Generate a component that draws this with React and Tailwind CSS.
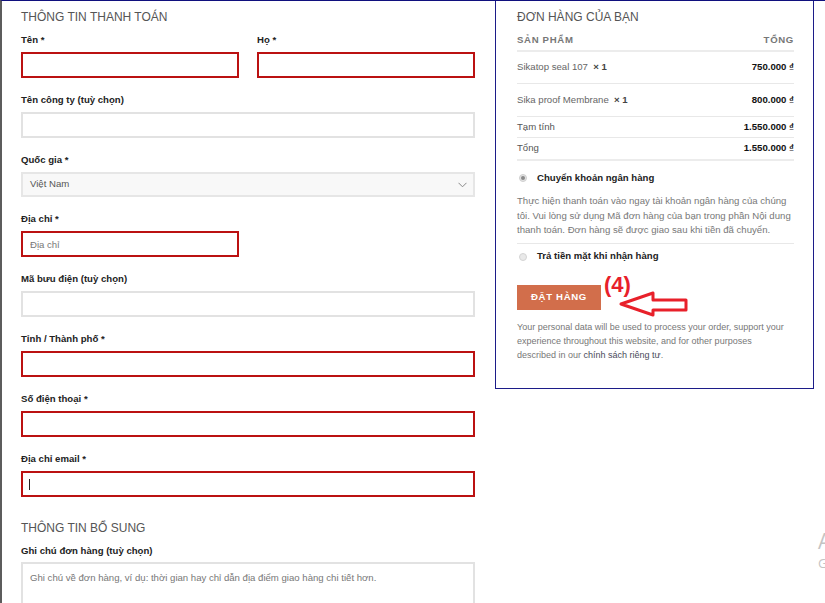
import { useState } from "react";

const inputBase =
  "block w-full h-[26px] px-[7px] text-[9.6px] text-[#333] placeholder:text-[#777] bg-white outline-none";

function Label({ children }) {
  return (
    <label className="block text-[9.6px] leading-[12px] font-bold text-[#222] mb-[6px]">
      {children}
    </label>
  );
}

function TextInput({ error = false, placeholder = "" }) {
  return (
    <input
      type="text"
      readOnly
      placeholder={placeholder}
      className={`${inputBase} ${
        error
          ? "border-2 border-[#bb1111]"
          : "border-2 border-[#e2e2e2]"
      }`}
    />
  );
}

function Field({ label, error, placeholder, children }) {
  return (
    <div className="mb-[16px]">
      <Label>{label}</Label>
      {children || <TextInput error={error} placeholder={placeholder} />}
    </div>
  );
}

function CountrySelect() {
  return (
    <div className="flex items-center justify-between h-[25px] pl-[7px] pr-[6px] bg-[#f8f8f8] border-2 border-[#e6e6e6] text-[9.6px] text-[#555]">
      <span>Việt Nam</span>
      <svg width="9" height="6" viewBox="0 0 9 6" fill="none">
        <polyline points="0.5,0.8 4.5,4.8 8.5,0.8" stroke="#888" strokeWidth="1" />
      </svg>
    </div>
  );
}

function EmailInput() {
  return (
    <div className="relative">
      <TextInput error />
      <span className="absolute left-[8px] top-[8px] w-px h-[11px] bg-[#222]" />
    </div>
  );
}

function OrderRow({ name, qty, price, height }) {
  return (
    <div className={`flex items-center justify-between border-b border-[#e8e8e8] ${height}`}>
      <span className="text-[#666]">
        {name}
        {"\u00a0 "}
        <strong className="text-[#444]">× {qty}</strong>
      </span>
      <span className="font-bold text-[#111]">{price}</span>
    </div>
  );
}

function Radio({ checked }) {
  return (
    <span
      className={`ml-[2px] w-[8px] h-[8px] rounded-full flex items-center justify-center shrink-0 ${
        checked ? "bg-[#e4e4e4] border border-[#cfcfcf]" : "bg-[#e9e9e9] border border-[#d4d4d4]"
      }`}
    >
      {checked && <span className="w-[4px] h-[4px] rounded-full bg-[#8a8a8a]" />}
    </span>
  );
}

function OrderReview() {
  const [method] = useState("bank");

  return (
    <div className="w-[319px] shrink-0 self-start ml-[20px] border-x border-b border-[#1c1c88] pl-[21px] pr-[19px] pt-[8px] pb-[26px] text-[9.6px]">
      <h3 className="text-[12px] leading-[16px] text-[#555] uppercase">
        Đơn hàng của bạn
      </h3>

      <div className="mt-[9px] flex justify-between pb-[4px] border-b-2 border-[#ececec] leading-[12px] font-bold text-[#777] tracking-[0.07em]">
        <span>SẢN PHẨM</span>
        <span>TỔNG</span>
      </div>

      <OrderRow name="Sikatop seal 107" qty="1" price="750.000 ₫" height="h-[32px]" />
      <OrderRow name="Sika proof Membrane" qty="1" price="800.000 ₫" height="h-[33px]" />

      <div className="flex items-center justify-between h-[21px] border-b border-[#e8e8e8]">
        <span className="text-[#555]">Tạm tính</span>
        <span className="font-bold text-[#111]">1.550.000 ₫</span>
      </div>
      <div className="flex items-center justify-between h-[23px] border-b-2 border-[#ececec]">
        <span className="text-[#555]">Tổng</span>
        <span className="font-bold text-[#111]">1.550.000 ₫</span>
      </div>

      <div className="mt-[9px] flex items-center h-[16px] gap-[10px]">
        <Radio checked={method === "bank"} />
        <span className="font-bold text-[#222]">Chuyển khoản ngân hàng</span>
      </div>
      <p className="mt-[8px] pb-[5px] leading-[14.5px] text-[#777] border-b border-[#e8e8e8]">
        Thực hiện thanh toán vào ngay tài khoản ngân hàng của chúng tôi. Vui lòng sử
        dụng Mã đơn hàng của bạn trong phần Nội dung thanh toán. Đơn hàng sẽ được
        giao sau khi tiền đã chuyển.
      </p>
      <div className="mt-[5px] flex items-center h-[16px] gap-[10px]">
        <Radio checked={method === "cod"} />
        <span className="font-bold text-[#222]">Trả tiền mặt khi nhận hàng</span>
      </div>

      <div className="relative mt-[20px] flex">
        <button
          type="button"
          className="h-[25px] w-[84px] bg-[#d26e4b] text-white font-bold tracking-[0.07em] text-[9.6px]"
        >
          ĐẶT HÀNG
        </button>
        <span className="absolute left-[87px] top-[-13px] text-[22px] leading-[26px] font-bold text-[#e8202a]">
          (4)
        </span>
        <svg
          className="absolute left-[101px] top-[4px]"
          width="72"
          height="30"
          viewBox="0 0 72 30"
          fill="none"
        >
          <path
            d="M3 15 L35 4 L35 11 L68 11 L68 21 L35 21 L35 26 Z"
            stroke="#e8202a"
            strokeWidth="3"
            strokeLinejoin="round"
          />
        </svg>
      </div>

      <p className="mt-[10px] pr-[6px] text-[9px] leading-[14px] text-[#777]">
        Your personal data will be used to process your order, support your
        experience throughout this website, and for other purposes described in
        our <a className="text-[#4a4a5a]">chính sách riêng tư</a>.
      </p>
    </div>
  );
}

export default function App() {
  return (
    <div className="relative h-[603px] overflow-hidden bg-white border-t border-[#10107e] border-l-2 border-l-[#5c5c5c] font-['Liberation_Sans',Arial,sans-serif] flex items-start">
      <div className="w-[454px] shrink-0 ml-[19px] pt-[8px]">
        <h3 className="text-[12px] leading-[16px] text-[#555] uppercase mb-[9px]">
          Thông tin thanh toán
        </h3>

        <div className="grid grid-cols-2 gap-x-[18px]">
          <Field label="Tên *" error />
          <Field label="Họ *" error />
        </div>
        <Field label="Tên công ty (tuỳ chọn)" />
        <Field label="Quốc gia *">
          <CountrySelect />
        </Field>
        <div className="w-[218px]">
          <Field label="Địa chỉ *" error placeholder="Địa chỉ" />
        </div>
        <Field label="Mã bưu điện (tuỳ chọn)" />
        <Field label="Tỉnh / Thành phố *" error />
        <Field label="Số điện thoại *" error />
        <Field label="Địa chỉ email *">
          <EmailInput />
        </Field>

        <h3 className="mt-[23px] text-[12px] leading-[16px] text-[#555] uppercase mb-[9px]">
          Thông tin bổ sung
        </h3>
        <label className="block text-[9.6px] leading-[12px] font-bold text-[#222] mb-[5px]">
          Ghi chú đơn hàng (tuỳ chọn)
        </label>
        <textarea
          readOnly
          rows={5}
          placeholder="Ghi chú về đơn hàng, ví dụ: thời gian hay chỉ dẫn địa điểm giao hàng chi tiết hơn."
          className="block w-full h-[90px] resize-none px-[7px] pt-[7px] leading-[14px] text-[9.6px] placeholder:text-[#777] border-2 border-[#e2e2e2] outline-none"
        />
      </div>

      <OrderReview />

      <div className="absolute left-[816px] top-[527px] font-['Open_Sans',sans-serif] text-[#c4c4c4] whitespace-nowrap">
        <div className="text-[21px] leading-[26px]">Activate Windows</div>
        <div className="text-[13px] leading-[18px]">Go to Settings to activate Windows.</div>
      </div>
    </div>
  );
}
